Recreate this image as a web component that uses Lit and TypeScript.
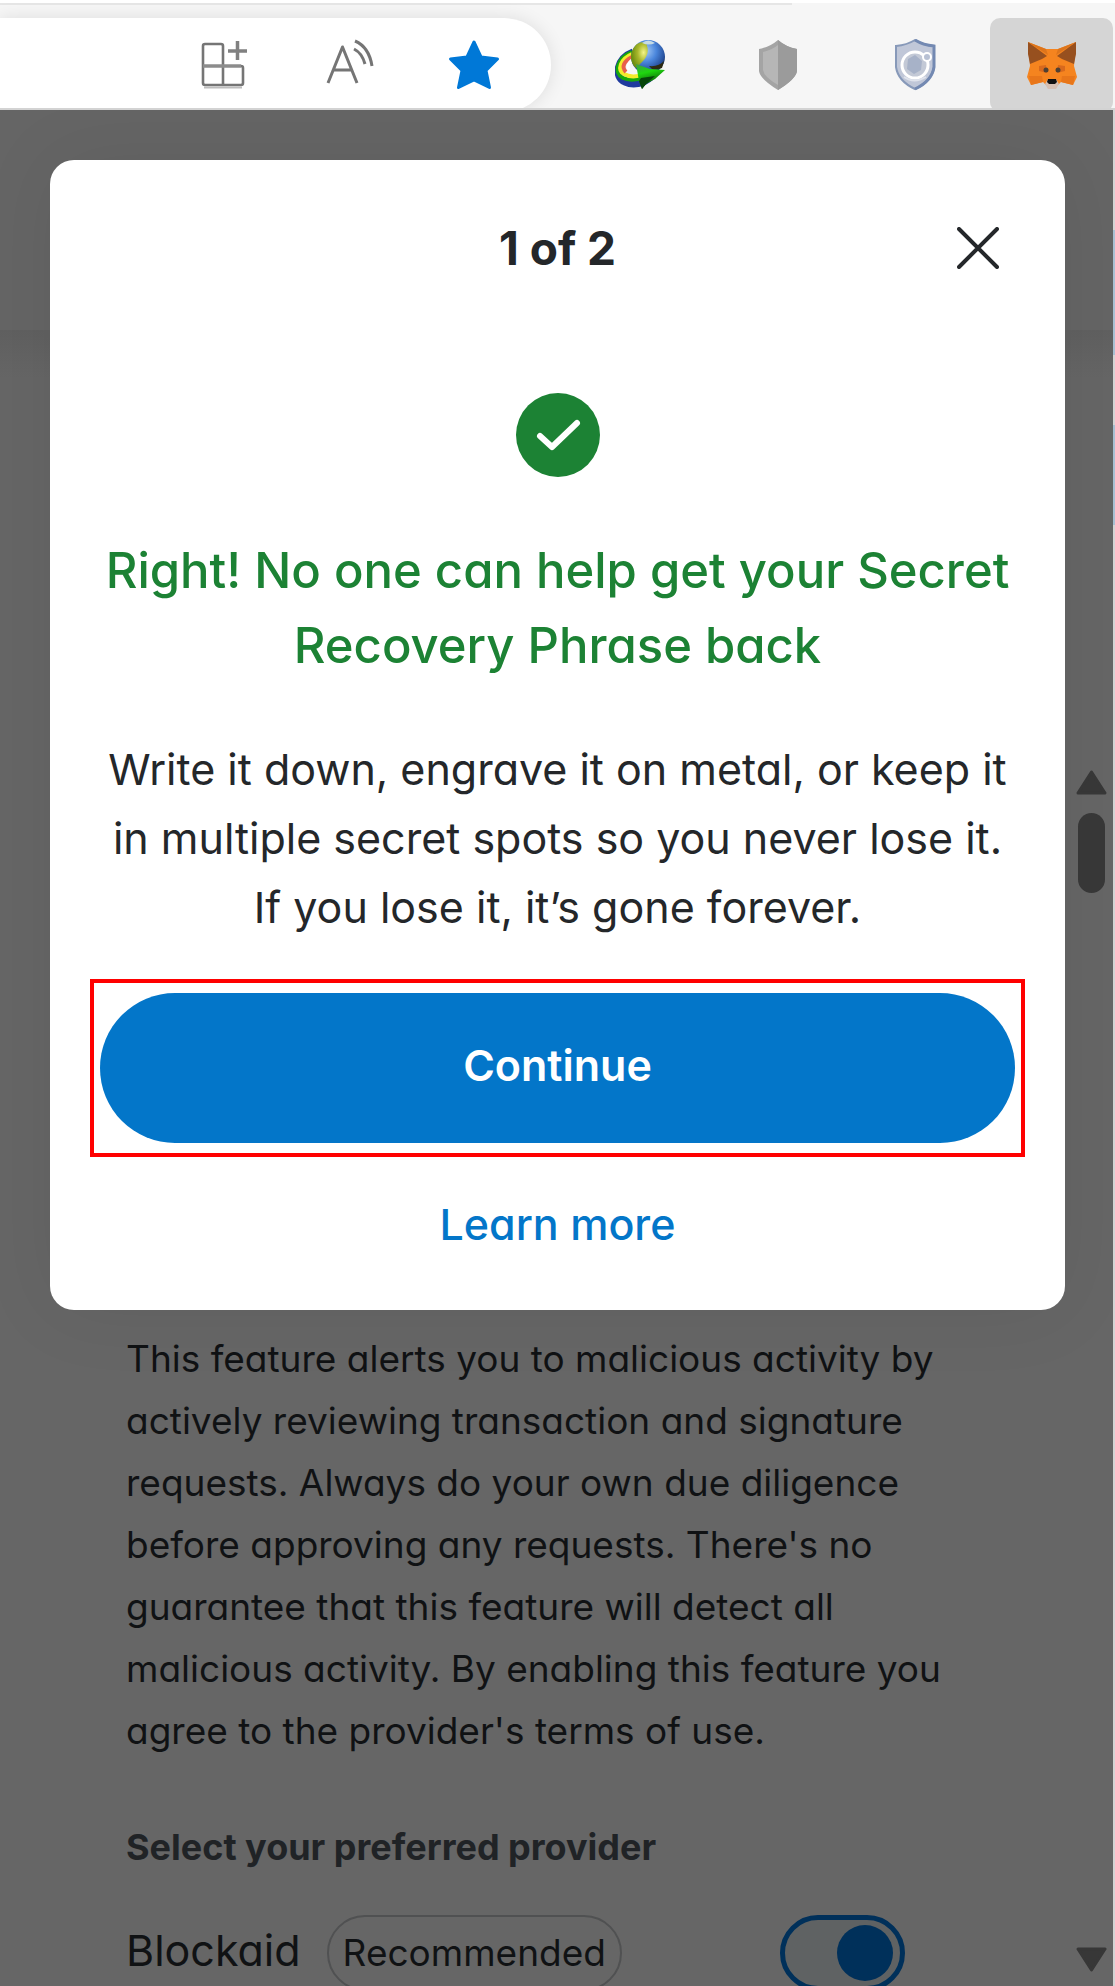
import { LitElement, html, css, svg } from "lit";
import { customElement, state } from "lit/decorators.js";

const collectionsIcon = svg`
  <svg class="icon" viewBox="0 0 52 52" aria-hidden="true">
    <g fill="none" stroke="#757575" stroke-width="2.600">
      <path d="M25 27V7a2 2 0 0 0-2-2H7a2 2 0 0 0-2 2v37a2 2 0 0 0 2 2h36a2 2 0 0 0 2-2V29a2 2 0 0 0-2-2" />
      <path d="M25 27v19" />
      <path d="M5 27h38" stroke="#8c8c8c" stroke-width="3.500" />
      <path d="M39.500 2v19M30 12h19" stroke="#808080" stroke-width="3.500" />
    </g>
    <path d="M6 48.500h38" stroke="#bdbdbd" stroke-width="2" />
  </svg>`;

const readAloudIcon = svg`
  <svg class="icon" viewBox="0 0 52 52" aria-hidden="true">
    <g fill="none" stroke="#757575" stroke-width="3" stroke-linejoin="round">
      <path d="M5 44L19.500 8L34 44M10 31H29" />
      <path d="M31 10Q39 14 42 25" />
      <path d="M32 2Q46 8 49 27" />
    </g>
  </svg>`;

const starIcon = svg`
  <svg class="icon" viewBox="0 0 52 52" aria-hidden="true">
    <path d="M26 3L33 18L49.500 20L38 31.500L41.500 48.500L26 41L10.500 48.500L14 31.500L2.500 20L19 18Z"
      fill="#0078d7" stroke="#0078d7" stroke-width="3" stroke-linejoin="round" />
  </svg>`;

const globeIcon = svg`
  <svg class="icon" viewBox="0 0 52 52" aria-hidden="true">
    <defs>
      <radialGradient id="globe" cx="0.42" cy="0.32" r="0.72">
        <stop offset="0" stop-color="#a9cdf5" />
        <stop offset="0.45" stop-color="#4a86dc" />
        <stop offset="0.8" stop-color="#27509c" />
        <stop offset="1" stop-color="#101c30" />
      </radialGradient>
      <radialGradient id="land" cx="0.75" cy="0.4" r="0.7">
        <stop offset="0" stop-color="#f4f48a" />
        <stop offset="0.5" stop-color="#a9b82c" />
        <stop offset="1" stop-color="#6f9010" />
      </radialGradient>
      <linearGradient id="arrow" x1="0" y1="0" x2="0.3" y2="1">
        <stop offset="0" stop-color="#3f9c4a" />
        <stop offset="0.4" stop-color="#1fd60f" />
        <stop offset="1" stop-color="#053a05" />
      </linearGradient>
    </defs>
    <g fill="none" stroke-width="4">
      <path d="M18 13C2 19-2 38 10 43C18 47 28 45 36 38" stroke="#1f3a9e" stroke-width="7" />
      <path d="M17 13C1 19-1 35 8 39C15 42 26 41 36 35" stroke="#17a80c" />
      <path d="M17 15C5 20 2 31 9 35C14 38 22 38 30 35" stroke="#f4ec2c" />
      <path d="M17 18C9 22 6 28 11 33" stroke="#e8604a" />
      <path d="M17 21C13 24 12 27 14 31" stroke="#fff" stroke-width="3" />
    </g>
    <circle cx="33" cy="18" r="17" fill="url(#globe)" />
    <path d="M20 7C24 2 32 2 32 7C34 12 32 18 28 22L21 29C15 24 14 14 20 7Z" fill="url(#land)" />
    <path d="M27 4Q33-1 40 4Q34 7 27 4Z" fill="#c5dbe4" />
    <path d="M34 27Q44 28 49 22L47 29L38 31Z" fill="#2d2a10" />
    <path d="M21 25L35 30L50 31L40 40L31 45L27 50L24 42Z" fill="url(#arrow)" />
    <path d="M26 39L40 37L31 45L27 50L24 42Z" fill="#06450a" />
  </svg>`;

const shieldIcon = svg`
  <svg class="icon" viewBox="0 0 52 52" aria-hidden="true">
    <path d="M26 1Q34 8 45 10V32Q44 40 26 51Q8 40 7 32V10Q18 8 26 1Z" fill="#a4a4a4" />
    <path d="M26 6V46Q12 38 11 31V13Q20 11 26 6Z" fill="#b6b6b6" />
    <path d="M26 1Q34 8 45 10V32Q44 40 26 51Z" fill="#9b9b9b" />
  </svg>`;

const privacyIcon = svg`
  <svg class="icon" viewBox="0 0 52 52" aria-hidden="true">
    <path d="M26 1Q34 6 45 7V28Q43 42 26 50Q9 42 7 28V7Q18 6 26 1Z" fill="#c0c7d8" stroke="#8799b9" stroke-width="2" />
    <path d="M26 1Q34 6 45 7V28Q43 42 26 50" fill="none" stroke="#7389b2" stroke-width="3" />
    <circle cx="26" cy="26" r="13" fill="#c3c9d6" stroke="#fff" stroke-width="3" />
    <path d="M19 20L26 16L33 22L32 31L25 35L18 30Z" fill="#a7b2c8" />
    <circle cx="38" cy="18" r="4" fill="#b8c1d4" stroke="#fff" stroke-width="2" />
    <path d="M15 38Q25 45 37 38" fill="none" stroke="#dfe3ec" stroke-width="2" />
  </svg>`;

const foxIcon = svg`
  <svg class="icon" viewBox="0 0 52 52" aria-hidden="true">
    <path d="M2 3L20 10H32L50 3L48 27L51 38L47 46L35 43L30 48H22L17 43L5 46L1 38L4 27Z" fill="#f5841f" />
    <path d="M2 3L21 17L16 20L4 25L2 15Z" fill="#97501f" />
    <path d="M50 3L31 17L36 20L48 25L50 15Z" fill="#97501f" />
    <path d="M2 3L20 10L22 16Z" fill="#dd751c" />
    <path d="M50 3L32 10L30 16Z" fill="#dd751c" />
    <path d="M13 27L20 26L21 34L13 32Z" fill="#d8691d" />
    <path d="M39 27L32 26L31 34L39 32Z" fill="#d8691d" />
    <path d="M3 37H16L17 43L5 46Z" fill="#e8761a" />
    <path d="M49 37H36L35 43L47 46Z" fill="#e8761a" />
    <circle cx="20" cy="31" r="2.500" fill="#4f4033" />
    <circle cx="32" cy="31" r="2.500" fill="#4f4033" />
    <path d="M19 45L22 40H30L33 45L30 50H22Z" fill="#d5bfb2" />
    <path d="M22 40H30L31 43L29 45H23L21 43Z" fill="#111" />
  </svg>`;

@customElement("browser-toolbar")
class BrowserToolbar extends LitElement {
  static styles = css`
    :host {
      display: block;
      flex: none;
      height: 110px;
      overflow: hidden;
      box-sizing: border-box;
      border-top: 3px solid #fff;
      border-bottom: 2px solid #d3d3d3;
      background: #f6f6f6;
    }
    .edge {
      width: 71%;
      height: 2px;
      background: #e6e6e6;
    }
    .bar {
      display: flex;
      justify-content: space-between;
      padding: 13px 2px 0 0;
    }
    .address {
      display: flex;
      justify-content: flex-end;
      align-items: center;
      gap: 73px;
      box-sizing: border-box;
      width: 49.5%;
      height: 94px;
      padding: 0 51px 0 0;
      border-radius: 0 47px 47px 0;
      background: #fff;
      box-shadow: 0 0 18px #0000001a;
    }
    .extensions {
      display: flex;
      gap: 14px;
    }
    button {
      display: flex;
      justify-content: center;
      align-items: center;
      padding: 0;
      border: 0;
      background: none;
    }
    .extensions button {
      width: 123px;
      height: 94px;
    }
    .extensions .active {
      border-radius: 10px;
      background: #d5d5d5;
    }
    .icon {
      display: block;
      width: 52px;
      height: 52px;
    }
  `;

  render() {
    return html`
      <div class="edge"></div>
      <div class="bar">
        <div class="address">
          <button aria-label="Apps">${collectionsIcon}</button>
          <button aria-label="Read aloud">${readAloudIcon}</button>
          <button aria-label="Favorite">${starIcon}</button>
        </div>
        <div class="extensions">
          <button aria-label="Download manager">${globeIcon}</button>
          <button aria-label="Shield">${shieldIcon}</button>
          <button aria-label="Privacy">${privacyIcon}</button>
          <button class="active" aria-label="Wallet">${foxIcon}</button>
        </div>
      </div>
    `;
  }
}

@customElement("provider-settings")
class ProviderSettings extends LitElement {
  static styles = css`
    :host {
      display: block;
      color: #101214;
    }
    .header {
      height: 220px;
      background: #656565;
    }
    .content {
      padding: 998px 148px 0 126px;
      background: linear-gradient(#606060, #666 48px);
    }
    p,
    h2 {
      margin: 0;
      font-size: 37px;
      line-height: 62px;
      font-weight: 400;
    }
    h2 {
      margin-top: 54px;
      font-size: 36px;
      font-weight: 700;
      color: #202326;
    }
    .provider {
      display: flex;
      justify-content: space-between;
      align-items: center;
      margin-top: 37px;
      padding-right: 60px;
    }
    .name {
      display: flex;
      align-items: baseline;
      gap: 26px;
      font-size: 43px;
    }
    .pill {
      padding: 0 14px;
      border: 2px solid #505152;
      border-radius: 38px;
      font-size: 37px;
      line-height: 72px;
    }
    .toggle {
      appearance: none;
      display: flex;
      justify-content: flex-end;
      align-items: center;
      box-sizing: border-box;
      width: 125px;
      height: 76px;
      margin: 0;
      padding: 0 7px;
      border: 5px solid #00305a;
      border-radius: 38px;
      background: #5f6263;
    }
    .toggle::before {
      content: "";
      width: 56px;
      height: 56px;
      border-radius: 50%;
      background: #00305a;
    }
    .toggle:not(:checked) {
      justify-content: flex-start;
    }
  `;

  render() {
    return html`
      <div class="header"></div>
      <div class="content">
        <p>
          This feature alerts you to malicious activity by actively reviewing
          transaction and signature requests. Always do your own due diligence
          before approving any requests. There's no guarantee that this feature
          will detect all malicious activity. By enabling this feature you agree
          to the provider's terms of use.
        </p>
        <h2>Select your preferred provider</h2>
        <div class="provider">
          <label class="name" for="blockaid">
            Blockaid<span class="pill">Recommended</span>
          </label>
          <input id="blockaid" class="toggle" type="checkbox" checked />
        </div>
      </div>
    `;
  }
}

@customElement("quiz-dialog")
class QuizDialog extends LitElement {
  static styles = css`
    :host {
      display: block;
      box-sizing: border-box;
      padding: 58px 40px 56px;
      border-radius: 24px;
      background: #fff;
      color: #24272a;
      text-align: center;
      box-shadow: 0 0 80px #00000012;
    }
    .head {
      display: grid;
      grid-template-columns: 1fr auto 1fr;
      align-items: center;
      padding: 0 26px;
    }
    .step {
      grid-column: 2;
      margin: 0;
      font-size: 46px;
      line-height: 60px;
      font-weight: 700;
    }
    .close {
      justify-self: end;
      padding: 0;
      border: 0;
      background: none;
    }
    .close svg,
    .mark {
      display: block;
    }
    .mark {
      margin: 115px auto 56px;
    }
    h1 {
      margin: 0 0 52px;
      font-size: 49px;
      line-height: 75px;
      font-weight: 500;
      color: #1c8234;
    }
    p {
      margin: 0 0 37px;
      font-size: 43px;
      line-height: 69px;
    }
    .highlight {
      padding: 10px 6px;
      border: 4px solid #f00;
    }
    .continue {
      display: block;
      width: 100%;
      height: 150px;
      padding: 0 0 6px;
      border: 0;
      border-radius: 75px;
      background: #0376c9;
      color: #fff;
      font: 600 43px/60px Inter, sans-serif;
      font-feature-settings: "cv11";
    }
    .more {
      display: inline-block;
      margin-top: 37px;
      color: #0376c9;
      font-size: 43px;
      line-height: 60px;
      font-weight: 500;
      text-decoration: none;
    }
  `;

  render() {
    return html`
      <div class="head">
        <h2 class="step">1 of 2</h2>
        <button class="close" aria-label="Close" @click=${() => this.dispatchEvent(new Event("close"))}>
          <svg width="42" height="42" viewBox="0 0 42 42">
            <path d="M2 2L40 40M40 2L2 40" stroke="#24272a" stroke-width="4" stroke-linecap="round" />
          </svg>
        </button>
      </div>
      <svg class="mark" width="84" height="84" viewBox="0 0 84 84" aria-hidden="true">
        <circle cx="42" cy="42" r="42" fill="#1c8234" />
        <path d="M24 43L36 54L61 30" fill="none" stroke="#fff" stroke-width="6" stroke-linejoin="round" stroke-linecap="round" />
      </svg>
      <h1>Right! No one can help get your Secret<br />Recovery Phrase back</h1>
      <p>
        Write it down, engrave it on metal, or keep it<br />
        in multiple secret spots so you never lose it.<br />
        If you lose it, it’s gone forever.
      </p>
      <div class="highlight"><button class="continue">Continue</button></div>
      <a class="more" href="#">Learn more</a>
    `;
  }
}

@customElement("app-root")
class AppRoot extends LitElement {
  static styles = css`
    :host {
      display: flex;
      flex-direction: column;
      height: 100vh;
      overflow: hidden;
      font-family: Inter, sans-serif;
      font-feature-settings: "cv11";
    }
    .popup {
      display: grid;
      grid-template-columns: 1fr 48px 2px;
      grid-template-rows: minmax(0, 1fr);
      flex: 1;
      min-height: 0;
      overflow: hidden;
      background: #656565;
    }
    .page {
      grid-area: 1 / 1 / 2 / 3;
      min-height: 0;
    }
    .dialog {
      grid-area: 1 / 1;
      align-self: start;
      margin: 50px 0 0 50px;
    }
    .scroll {
      grid-area: 1 / 2;
      display: flex;
      flex-direction: column;
      align-items: center;
      padding: 660px 0 14px 5px;
    }
    .thumb {
      width: 27px;
      height: 80px;
      margin: 18px 0 auto;
      border-radius: 14px;
      background: #373737;
    }
    .strip {
      grid-area: 1 / 3;
      background: linear-gradient(
        #d4d4d4 120px,
        #a9c0d2 120px 245px,
        #d4d4d4 245px 315px,
        #a9c0d2 315px 415px,
        #d4d4d4 415px
      );
    }
  `;

  @state() open = true;

  render() {
    return html`
      <browser-toolbar></browser-toolbar>
      <main class="popup">
        <provider-settings class="page"></provider-settings>
        ${this.open
          ? html`<quiz-dialog class="dialog" @close=${() => (this.open = false)}></quiz-dialog>`
          : ""}
        <div class="scroll" aria-hidden="true">
          <svg width="31" height="25" viewBox="0 0 31 25">
            <path d="M15.500 2L29 23H2Z" fill="#373737" stroke="#373737" stroke-width="3" stroke-linejoin="round" />
          </svg>
          <div class="thumb"></div>
          <svg width="31" height="25" viewBox="0 0 31 25">
            <path d="M15.500 23L29 2H2Z" fill="#373737" stroke="#373737" stroke-width="3" stroke-linejoin="round" />
          </svg>
        </div>
        <div class="strip"></div>
      </main>
    `;
  }
}
